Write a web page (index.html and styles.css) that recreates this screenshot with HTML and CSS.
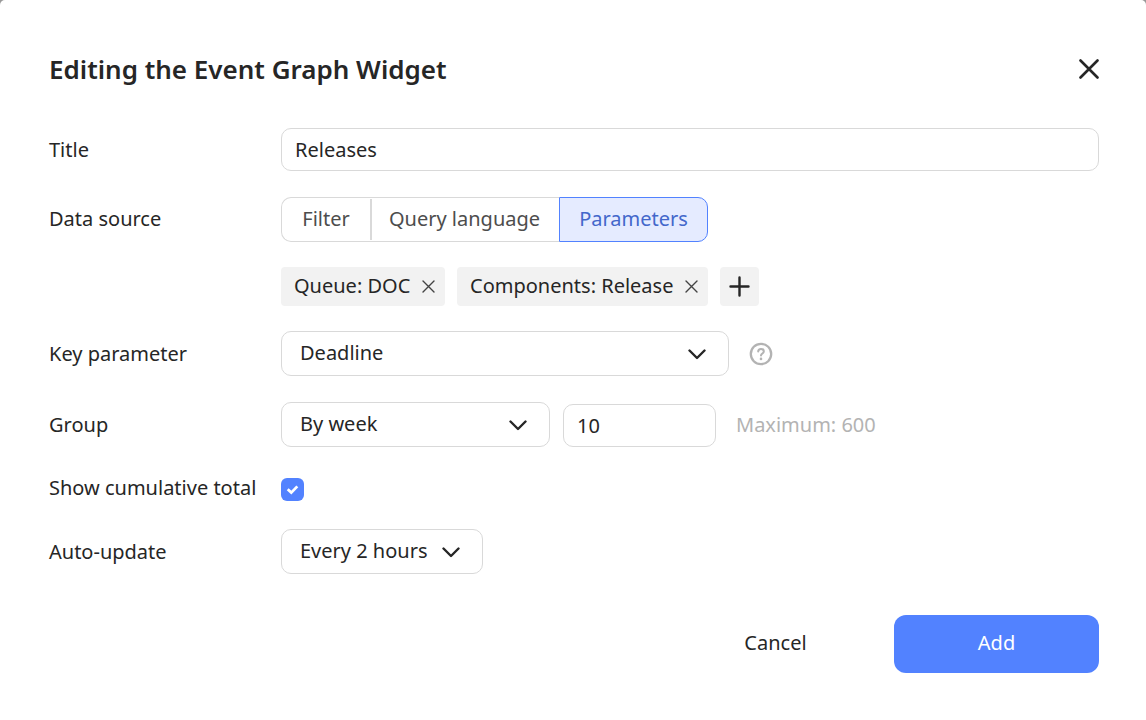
FILE: index.html
```html
<!DOCTYPE html>
<html lang="en">
<head>
<meta charset="utf-8">
<meta name="viewport" content="width=device-width, initial-scale=1">
<title>Editing the Event Graph Widget</title>
<link rel="stylesheet" href="styles.css">
</head>
<body>
<main class="dialog" role="dialog" aria-labelledby="dialog-title">
  <header class="dialog-header">
    <h1 class="dialog-title" id="dialog-title">Editing the Event Graph Widget</h1>
    <button class="close" type="button" aria-label="Close">
      <svg class="icon" width="20" height="20" viewBox="0 0 20 20"><path d="M1.5 1.5 18.500 18.500M18.500 1.500 1.500 18.500" stroke-width="2.600"/></svg>
    </button>
  </header>
  <form class="form">
    <div class="row">
      <label class="label" for="title">Title</label>
      <input class="input" id="title" type="text" value="Releases">
    </div>
    <div class="row row-source">
      <span class="label label-source" id="source-label">Data source</span>
      <div class="source">
        <div class="segments" role="radiogroup" aria-labelledby="source-label">
          <label class="segment"><input class="segment-radio" type="radio" name="source"><span>Filter</span></label>
          <label class="segment segment-divided"><input class="segment-radio" type="radio" name="source"><span>Query language</span></label>
          <label class="segment segment-active"><input class="segment-radio" type="radio" name="source" checked><span>Parameters</span></label>
        </div>
        <div class="tags">
          <span class="tag tag-queue">Queue: DOC
            <button class="tag-remove" type="button" aria-label="Remove Queue"><svg class="icon" width="13" height="13" viewBox="0 0 13 13"><path d="M1 1 12 12M12 1 1 12" stroke-width="1.400"/></svg></button>
          </span>
          <span class="tag tag-components">Components: Release
            <button class="tag-remove" type="button" aria-label="Remove Components"><svg class="icon" width="13" height="13" viewBox="0 0 13 13"><path d="M1 1 12 12M12 1 1 12" stroke-width="1.400"/></svg></button>
          </span>
          <button class="tag-add" type="button" aria-label="Add parameter"><svg class="icon" width="21" height="21" viewBox="0 0 21 21"><path d="M10.500 1.500V19.500M1.500 10.500H19.500" stroke-width="2.400"/></svg></button>
        </div>
      </div>
    </div>
    <div class="row">
      <label class="label" for="key">Key parameter</label>
      <div class="controls">
        <span class="select-box select-wide">
          <select class="select" id="key"><option>Deadline</option></select>
          <svg class="icon chevron" width="18" height="12" viewBox="0 0 18 12"><path d="M1.500 2.500 9 10 16.500 2.500" stroke-width="2.400"/></svg>
        </span>
        <button class="help" type="button" aria-label="Help">
          <svg class="icon" width="24" height="24" viewBox="0 0 24 24"><circle cx="12" cy="12" r="10.200" stroke-width="2.300"/><path d="M9.200 9.600C9.200 8 10.400 7 12 7s2.800 1 2.800 2.500c0 1.900-2.800 2.100-2.800 4" stroke-width="2"/><path d="M12 16.900v.1" stroke-width="2.600"/></svg>
        </button>
      </div>
    </div>
    <div class="row">
      <label class="label" for="group">Group</label>
      <div class="controls controls-group">
        <span class="select-box select-medium">
          <select class="select" id="group"><option>By week</option></select>
          <svg class="icon chevron" width="18" height="12" viewBox="0 0 18 12"><path d="M1.500 2.500 9 10 16.500 2.500" stroke-width="2.400"/></svg>
        </span>
        <input class="input input-count" type="text" inputmode="numeric" value="10" aria-label="Number of periods" aria-describedby="max-hint">
        <span class="hint" id="max-hint">Maximum: 600</span>
      </div>
    </div>
    <div class="row">
      <label class="label" for="total">Show cumulative total</label>
      <div class="check-box">
        <input class="check" id="total" type="checkbox" checked>
        <svg class="icon check-mark" width="13" height="10" viewBox="0 0 13 10"><path d="M1.700 4.200 5.300 7.600 11.300 1.400" stroke-width="2.800" stroke-linecap="butt" stroke-linejoin="miter"/></svg>
      </div>
    </div>
    <div class="row">
      <label class="label" for="update">Auto-update</label>
      <span class="select-box select-small">
        <select class="select" id="update"><option>Every 2 hours</option></select>
        <svg class="icon chevron" width="18" height="12" viewBox="0 0 18 12"><path d="M1.500 2.500 9 10 16.500 2.500" stroke-width="2.400"/></svg>
      </span>
    </div>
    <footer class="actions">
      <button class="button button-cancel" type="button">Cancel</button>
      <button class="button button-add" type="submit">Add</button>
    </footer>
  </form>
</main>
</body>
</html>
```
FILE: styles.css
```css
* {
  box-sizing: border-box;
}

body {
  margin: 0;
  background: #999;
  color: #262626;
  font: 20px/28px "Noto Sans", "Open Sans", sans-serif;
}

button,
input,
select {
  margin: 0;
  color: inherit;
  font: inherit;
}

button {
  padding: 0;
  border: 0;
  background: none;
  cursor: pointer;
}

.dialog {
  min-height: 100vh;
  padding: 48px 47px 47px 49px;
  border-radius: 5px 5px 0 0;
  background: #fff;
}

.dialog-header {
  display: flex;
  align-items: center;
  justify-content: space-between;
  margin-bottom: 38px;
}

.dialog-title {
  margin: 0;
  font-size: 26px;
  font-weight: 600;
  line-height: 42px;
}

.icon {
  display: block;
  fill: none;
  stroke: currentColor;
}

.icon:not(.check-mark) {
  stroke-linecap: round;
  stroke-linejoin: round;
}

.form {
  display: flex;
  flex-direction: column;
  gap: 26px;
}

.row {
  display: grid;
  grid-template-columns: 232px minmax(0, 1fr);
  align-items: center;
}

.row-source {
  align-items: start;
  margin-bottom: -1px;
}

.label {
  white-space: nowrap;
}

.label-source {
  line-height: 44px;
}

.input {
  width: 100%;
  height: 43px;
  padding: 0 13px;
  border: 1px solid #d9d9d9;
  border-radius: 10px;
  background: #fff;
}

.source {
  display: flex;
  flex-direction: column;
  align-items: flex-start;
  gap: 25px;
}

.segments {
  display: grid;
  grid-template-columns: 89px 189px 149px;
  height: 45px;
  border-radius: 10px;
  color: #4d4d4d;
}

.segment {
  position: relative;
  display: flex;
  align-items: center;
  justify-content: center;
  padding-bottom: 2px;
  border: 1px solid #d9d9d9;
  border-width: 1px 0;
  white-space: nowrap;
  cursor: pointer;
}

.segment:first-child {
  border-left-width: 1px;
  border-radius: 10px 0 0 10px;
}

.segment-divided::before {
  position: absolute;
  inset: 1px auto 1px 0;
  width: 2px;
  background: #d9d9d9;
  content: "";
}

.segment-active {
  border: 1px solid #5282ff;
  border-radius: 0 10px 10px 0;
  background: #e5ebff;
  color: #4367cb;
}

.segment-radio {
  position: absolute;
  inset: 0;
  opacity: 0;
}

.tags {
  display: flex;
  flex-wrap: wrap;
  gap: 12px;
}

.tag {
  display: flex;
  align-items: center;
  justify-content: space-between;
  height: 39px;
  padding: 0 10px 2px 13px;
  border-radius: 4px;
  background: #f2f2f2;
  white-space: nowrap;
}

.tag-queue {
  width: 164px;
}

.tag-components {
  width: 251px;
}

.tag-remove {
  padding-top: 2px;
  color: #444;
}

.tag-add {
  display: grid;
  place-items: center;
  width: 39px;
  height: 39px;
  border-radius: 4px;
  background: #f2f2f2;
}

.controls {
  display: flex;
  align-items: center;
  gap: 20px;
}

.controls-group {
  align-items: flex-end;
}

.select-box {
  position: relative;
  display: block;
}

.select-wide {
  width: 448px;
}

.select-medium {
  width: 269px;
}

.select-small {
  width: 202px;
}

.select {
  display: block;
  width: 100%;
  height: 45px;
  padding: 0 44px 2px 18px;
  border: 1px solid #d9d9d9;
  border-radius: 10px;
  background: #fff;
  appearance: none;
}

.chevron {
  position: absolute;
  top: 17px;
  right: 23px;
  pointer-events: none;
}

.help {
  color: #b3b3b3;
}

.input-count {
  width: 153px;
  margin-left: -7px;
}

.hint {
  color: #b3b3b3;
  line-height: 45px;
}

.check-box {
  position: relative;
  padding: 5px 0 2px;
}

.check {
  display: block;
  width: 23px;
  height: 23px;
  border-radius: 6px;
  background: #fff;
  box-shadow: inset 0 0 0 1px #d9d9d9;
  appearance: none;
}

.check:checked {
  background: #5282ff;
  box-shadow: none;
}

.check-mark {
  position: absolute;
  top: 12px;
  left: 5px;
  color: #fff;
  pointer-events: none;
}

.actions {
  display: flex;
  justify-content: flex-end;
  margin-top: 15px;
}

.button {
  height: 58px;
  padding-bottom: 2px;
  border-radius: 12px;
}

.button-cancel {
  width: 237px;
}

.button-add {
  width: 205px;
  background: #5282ff;
  color: #fff;
}
```
